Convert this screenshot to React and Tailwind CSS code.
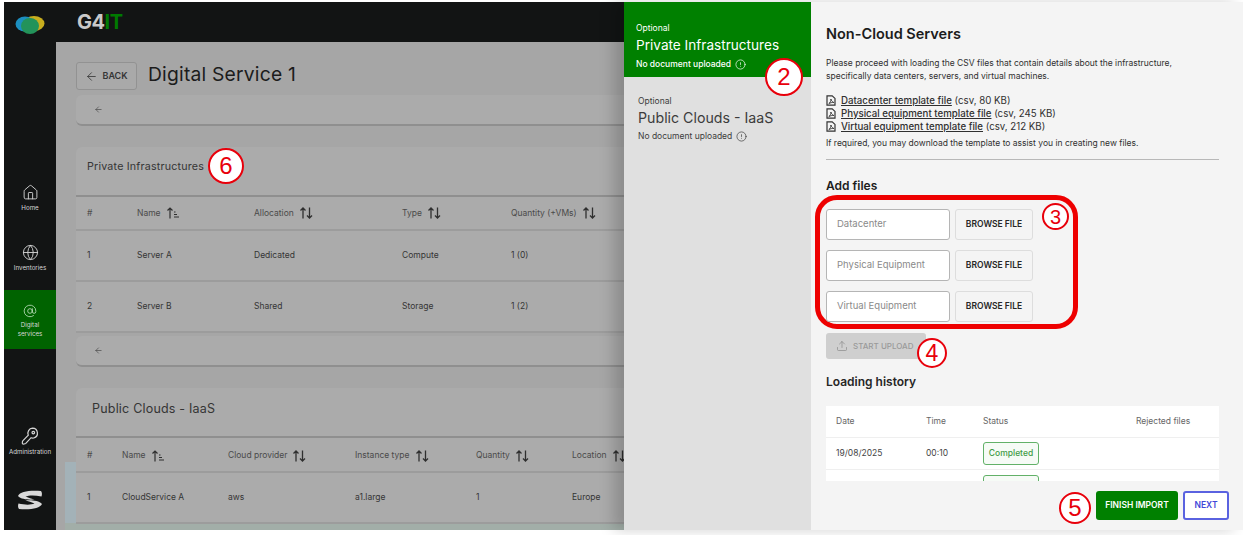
import React from "react";
import { House, Globe, AtSign, ArrowLeft, CircleAlert, Upload } from "lucide-react";

const SortIcon = () => (
  <svg width="15" height="12" viewBox="0 0 15 12" fill="none" stroke="#2f2f2f" strokeWidth="1.3" className="shrink-0">
    <path d="M4 11.5V1M1.5 3.5 4 1l2.5 2.5M10.5 0.5V11M8 8.5l2.5 2.5L13 8.5" />
  </svg>
);

const SortAscIcon = () => (
  <svg width="15" height="12" viewBox="0 0 15 12" fill="none" stroke="#2f2f2f" strokeWidth="1.2" className="shrink-0">
    <path d="M4 11.5V1M1.5 3.5 4 1l2.5 2.5" />
    <path d="M8 5h1.5M8 7.5h3M8 10h5" strokeWidth="1" />
  </svg>
);

const DocIcon = () => (
  <svg width="10" height="11" viewBox="0 0 10 11" fill="none" stroke="#333333" strokeWidth="1.2" className="shrink-0">
    <path d="M1 .8h5.2L9 3.4v6.8H1z" />
    <path d="M2.8 8.6c1.4-1 2.2-2.6 2.1-4.6.5 1.8 1.4 3 3 3.5-1.8-.2-3.5.2-5.1 1.1z" strokeWidth=".9" />
  </svg>
);

const KeyIcon = () => (
  <svg width="18" height="18" viewBox="0 0 18 18" fill="none" stroke="#d5d5d5" strokeWidth="1.2">
    <path d="M11.5 1.2a5 5 0 0 1 1.3 9.8c-1 .2-1.9.1-2.7-.3l-5.3 5.6c-.8.8-2.8.9-3.2.5-.5-.6-.3-2.500.4-3.200l5.300-5.400a5 5 0 0 1 4.200-7z" />
    <circle cx="12.300" cy="5.600" r="1.300" />
  </svg>
);

const Logo = () => (
  <svg width="30" height="20" viewBox="0 0 30 20">
    <ellipse cx="19" cy="8.500" rx="10.500" ry="7.500" fill="#c8ae1e" />
    <ellipse cx="10" cy="9" rx="9.500" ry="7.500" fill="#1c8fc0" />
    <ellipse cx="15" cy="11" rx="9" ry="8" fill="#23935a" />
  </svg>
);

const SopraLogo = () => (
  <svg width="26" height="20" viewBox="0 0 26 20" fill="#d9d9d9">
    <path d="M1 6C3 1.500 12 .2 24 1c1.200 1.800 1.200 3.500.5 5.500C18 5 12 5 8.500 6.500c3 1.200 6 2.200 9 3C12 10 4 9.500 1 6z" />
    <path d="M25 14C23 18.500 14 19.800 2 19c-1.200-1.800-1.200-3.500-.5-5.500C8 15 14 15 17.500 13.500c-3-1.200-6-2.200-9-3 5.500-.5 13.500 0 16.500 3.500z" />
  </svg>
);

const NavItem = ({ icon, label, active, className = "" }) => (
  <div className={`flex w-full flex-col items-center text-center text-[6.200px] leading-[9px] text-[#d8d8d8] ${active ? "bg-[#006300] pb-[11px] pt-[14px]" : ""} ${className}`}>
    {icon}
    <span className="mt-[2px]">{label}</span>
  </div>
);

const HeaderCell = ({ label, asc }) => (
  <div className="flex items-center gap-[5px] whitespace-nowrap">
    <span>{label}</span>
    {asc ? <SortAscIcon /> : <SortIcon />}
  </div>
);

const privateRows = [
  ["1", "Server A", "Dedicated", "Compute", "1 (0)"],
  ["2", "Server B", "Shared", "Storage", "1 (2)"],
];

const Pager = ({ className = "" }) => (
  <div className={`flex h-[31px] w-[600px] items-center rounded-md border-b-2 border-[#8f8f8f] bg-[#ababab] pl-[18px] ${className}`}>
    <ArrowLeft size={9} strokeWidth={1.6} color="#3a3a3a" />
  </div>
);

const Circle = ({ n, className }) => (
  <div className={`absolute flex items-center justify-center rounded-full border-2 border-[#e8000b] bg-white font-['Liberation_Sans',sans-serif] text-[#e8000b] ${className}`}>
    {n}
  </div>
);

const MainContent = () => (
  <main className="relative min-w-0 flex-1 overflow-hidden bg-[#a6a6a6] pl-[20px] pt-[20px] text-[#353535]">
    <div className="absolute bottom-0 left-[9px] top-[420px] w-[11px] bg-[#a3b2b8]" />
    <div className="absolute bottom-0 left-[9px] h-[7px] w-[560px] bg-[#a2aea8]" />
    <div className="flex h-[28px] items-center">
      <div className="flex h-[28px] w-[61px] items-center justify-center gap-[4px] rounded-[3px] border border-[#929292] bg-[#a9a9a9] text-[9px] font-semibold">
        <ArrowLeft size={13} strokeWidth={1.5} />
        BACK
      </div>
      <h1 className="mb-[2px] ml-[11px] text-[19.300px] leading-none tracking-[0.2px] text-[#1c1c1c]">Digital Service 1</h1>
    </div>
    <Pager className="mt-[5px]" />

    <section className="relative mt-[21px] w-[600px]">
      <div className="flex h-[50px] items-center rounded-t-md border-b-2 border-[#8f8f8f] bg-[#ababab] pb-[8px] pl-[11px] text-[10.700px] tracking-[0.2px]">
        Private Infrastructures
      </div>
      <div className="grid h-[34px] grid-cols-[50px_117px_148px_109px_1fr] items-center border-b-2 border-[#9c9c9c] bg-[#ababab] pl-[11px] text-[8.500px] text-[#4a4a4a]">
        <span>#</span>
        <HeaderCell label="Name" asc />
        <HeaderCell label="Allocation" />
        <HeaderCell label="Type" />
        <HeaderCell label="Quantity (+VMs)" />
      </div>
      {privateRows.map((row) => (
        <div key={row[0]} className="grid h-[51px] grid-cols-[50px_117px_148px_109px_1fr] items-center border-b-2 border-[#9c9c9c] bg-[#ababab] pl-[11px] text-[8.500px]">
          {row.map((cell) => <span key={cell}>{cell}</span>)}
        </div>
      ))}
    </section>
    <Pager className="mt-[3px]" />

    <section className="relative mt-[21px] w-[600px]">
      <div className="flex h-[50px] items-center rounded-t-md border-b-2 border-[#8f8f8f] bg-[#ababab] pb-[6px] pl-[16px] text-[12.500px] tracking-[0.2px]">
        Public Clouds - IaaS
      </div>
      <div className="grid h-[35px] grid-cols-[35px_106px_127px_121px_96px_1fr] items-center border-b-2 border-[#9c9c9c] bg-[#ababab] pl-[11px] pt-[2px] text-[8.500px] text-[#4a4a4a]">
        <span>#</span>
        <HeaderCell label="Name" asc />
        <HeaderCell label="Cloud provider" />
        <HeaderCell label="Instance type" />
        <HeaderCell label="Quantity" />
        <HeaderCell label="Location" />
      </div>
      <div className="grid h-[51px] grid-cols-[35px_106px_127px_121px_96px_1fr] items-center border-b-2 border-[#9c9c9c] bg-[#ababab] pl-[11px] text-[8.500px]">
        <span>1</span>
        <span>CloudService A</span>
        <span>aws</span>
        <span>a1.large</span>
        <span>1</span>
        <span>Europe</span>
      </div>
    </section>
  </main>
);

const StepCard = ({ title, active }) => (
  <div className={active ? "h-[75px] bg-[#008000] pl-[12px] pt-[21px] text-white" : "pl-[14px] pt-[19px] text-[#3c3c3c]"}>
    <div className="text-[8.500px] leading-[11px]">Optional</div>
    <div className={`mt-[2px] leading-[18px] ${active ? "text-[13.600px]" : "text-[14.200px]"}`}>{title}</div>
    <div className={`flex items-center gap-[4px] text-[8.500px] leading-[12px] ${active ? "mt-[4px] font-medium" : "mt-[3px]"}`}>
      No document uploaded
      <CircleAlert size={11} strokeWidth={1.5} />
    </div>
  </div>
);

const templates = [
  ["Datacenter template file", "(csv, 80 KB)"],
  ["Physical equipment template file", "(csv, 245 KB)"],
  ["Virtual equipment template file", "(csv, 212 KB)"],
];

const FileRow = ({ placeholder }) => (
  <div className="flex gap-[5px]">
    <div className="flex h-[31px] w-[124px] items-center rounded-[3px] border border-[#b5b5b5] bg-white pl-[10px] text-[9.500px] text-[#8a8a8a]">
      {placeholder}
    </div>
    <div className="flex h-[31px] w-[78px] items-center justify-center rounded-[3px] border border-[#dddddd] bg-[#f4f4f4] text-[8.500px] font-semibold text-[#262626]">
      BROWSE FILE
    </div>
  </div>
);

const ImportPanel = () => (
  <aside className="flex w-[432px] shrink-0 flex-col bg-[#f4f4f4] pl-[15px] pt-[23px] text-[#303030]">
    <h2 className="text-[14.500px] font-semibold leading-[18px] text-[#1c1c1c]">Non-Cloud Servers</h2>
    <p className="mt-[14px] w-[380px] text-[8.500px] leading-[13px]">
      Please proceed with loading the CSV files that contain details about the infrastructure, specifically data centers, servers, and virtual machines.
    </p>
    <ul className="mt-[11px] flex flex-col text-[9.700px] leading-[13px]">
      {templates.map(([name, size]) => (
        <li key={name} className="flex items-center gap-[5px]">
          <DocIcon />
          <span><span className="font-medium underline">{name}</span> {size}</span>
        </li>
      ))}
    </ul>
    <p className="mt-[4px] text-[8.500px] leading-[12px]">If required, you may download the template to assist you in creating new files.</p>
    <div className="mt-[10px] h-px w-[393px] bg-[#b8b8b8]" />
    <h3 className="mt-[18px] text-[12px] font-semibold leading-[15px] text-[#1c1c1c]">Add files</h3>
    <div className="-ml-[11px] mt-[2px] flex w-[263px] flex-col gap-[10px] rounded-[22px] border-[5px] border-[#ee0000] pb-[2px] pl-[6px] pt-[9px]">
      <FileRow placeholder="Datacenter" />
      <FileRow placeholder="Physical Equipment" />
      <FileRow placeholder="Virtual Equipment" />
    </div>
    <div className="mt-[4px] flex h-[26px] w-[100px] items-center gap-[5px] rounded-[3px] bg-[#cfcfcf] pl-[10px] text-[8px] font-medium text-[#9a9a9a]">
      <Upload size={12} strokeWidth={1.4} color="#8a8a8a" />
      START UPLOAD
    </div>
    <h3 className="mt-[15px] text-[12px] font-semibold leading-[15px] text-[#262626]">Loading history</h3>
    <div className="mt-[17px] h-[75px] w-[393px] overflow-hidden bg-white text-[8.500px]">
      <div className="grid h-[32px] grid-cols-[90px_57px_153px_1fr] items-center border-b border-[#efefef] pl-[10px] text-[#666666]">
        <span>Date</span><span>Time</span><span>Status</span><span>Rejected files</span>
      </div>
      <div className="grid h-[32px] grid-cols-[90px_57px_153px_1fr] items-center border-b border-[#efefef] pl-[10px] text-[#454545]">
        <span>19/08/2025</span>
        <span>00:10</span>
        <span className="flex h-[23px] w-[56px] items-center justify-center rounded-[3px] border border-[#62b168] bg-[#f6fbf6] text-[8.500px] font-medium text-[#3f9c46]">Completed</span>
      </div>
      {/* next row is scrolled out of view, only the top of its badge shows */}
      <div className="ml-[157px] mt-[5px] h-[23px] w-[56px] rounded-[3px] border border-[#62b168] bg-[#f6fbf6]" />
    </div>
    <div className="mt-[10px] flex gap-[5px] pl-[270px] text-[8.500px] font-semibold">
      <div className="flex h-[29px] w-[82px] items-center justify-center rounded-[3px] bg-[#008000] text-white">FINISH IMPORT</div>
      <div className="flex h-[29px] w-[46px] items-center justify-center rounded-[3px] border-2 border-[#5a62e0] bg-white text-[#3f48d8]">NEXT</div>
    </div>
  </aside>
);

export default function App() {
  return (
    <div className="relative h-[535px] w-[1243px] overflow-hidden bg-white pb-[5px] pl-[4px] pt-[2px] font-['Inter',sans-serif]">
      <div className="flex h-full">
        <nav className="flex w-[52px] shrink-0 flex-col items-center bg-[#121414] pt-[13px]">
          <Logo />
          <NavItem className="mt-[149px]" icon={<House size={17} strokeWidth={1.3} color="#d5d5d5" />} label="Home" />
          <NavItem className="mt-[32px]" icon={<Globe size={17} strokeWidth={1.3} color="#d5d5d5" />} label="Inventories" />
          <NavItem className="mt-[18px]" active icon={<AtSign size={14} strokeWidth={1.4} color="#bfe0bf" />} label={<>Digital<br />services</>} />
          <NavItem className="mt-[78px]" icon={<KeyIcon />} label="Administration" />
          <div className="mt-[34px]"><SopraLogo /></div>
        </nav>
        <div className="flex min-w-0 flex-1 flex-col">
          <header className="flex h-[40px] shrink-0 items-center bg-[#121414] pl-[21px] text-[20px] font-bold tracking-[-0.5px]">
            <span className="text-[#c9c9c9]">G4</span><span className="text-[#007a00]">IT</span>
          </header>
          <MainContent />
        </div>
        <div className="relative z-10 flex shrink-0 shadow-[-10px_0_14px_rgba(0,0,0,0.18)]">
          <div className="w-[187px] bg-[#e0e0e0]">
            <StepCard title="Private Infrastructures" active />
            <StepCard title="Public Clouds - IaaS" />
          </div>
          <ImportPanel />
        </div>
      </div>
      {/* numbered callouts laid over the screenshot */}
      <Circle n="6" className="left-[208px] top-[148px] z-20 h-[36px] w-[36px] text-[24px]" />
      <Circle n="2" className="left-[765px] top-[58px] z-20 h-[38px] w-[38px] text-[24px]" />
      <Circle n="3" className="left-[1042px] top-[203px] z-20 h-[27px] w-[27px] text-[20px]" />
      <Circle n="4" className="left-[917px] top-[338px] z-20 h-[30px] w-[30px] text-[23px]" />
      <Circle n="5" className="left-[1059px] top-[492px] z-20 h-[32px] w-[32px] text-[24px]" />
    </div>
  );
}
